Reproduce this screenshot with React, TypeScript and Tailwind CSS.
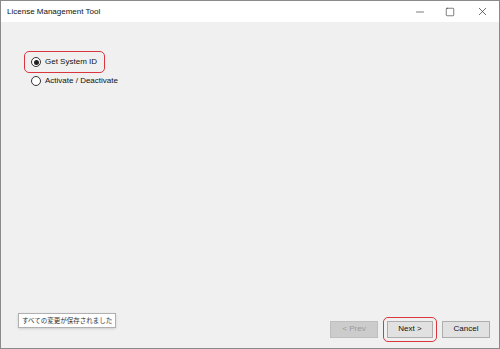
import { Minus, Square, X } from 'lucide-react';

const ui = { fontFamily: '"Liberation Sans", "Noto Sans CJK JP", sans-serif' };

function Radio({ checked, label }: { checked?: boolean; label: string }) {
  return (
    <div className="flex items-center gap-[4px] whitespace-nowrap">
      <span className="w-[10px] h-[10px] rounded-full border border-[#333] bg-white flex items-center justify-center shrink-0">
        {checked && <span className="w-[5px] h-[5px] rounded-full bg-[#222]" />}
      </span>
      <span className="text-[8px] text-[#111]">{label}</span>
    </div>
  );
}

export default function App() {
  return (
    <div className="w-[500px] h-[349px] flex flex-col border border-[#8a8a8a] bg-[#f0f0f0]" style={ui}>
      {/* Title bar */}
      <div className="h-[21px] bg-white flex items-center justify-between pl-[6px] shrink-0">
        <span className="text-[8px] text-[#111] whitespace-nowrap">License Management Tool</span>
        <div className="flex items-center h-full">
          <div className="w-[30px] flex justify-center"><Minus size={12} strokeWidth={1.2} className="text-[#222]" /></div>
          <div className="w-[30px] flex justify-center"><Square size={10} strokeWidth={1.4} className="text-[#222]" /></div>
          <div className="w-[34px] flex justify-center"><X size={13} strokeWidth={1.2} className="text-[#222]" /></div>
        </div>
      </div>

      {/* Body */}
      <div className="flex-1 flex flex-col pl-[23px] pt-[29px]">
        <div className="w-[81px] h-[22px] border border-[#d9363e] rounded-[5px] flex items-center pl-[6px]">
          <Radio checked label="Get System ID" />
        </div>
        <div className="pl-[7px] mt-[2px]">
          <Radio label="Activate / Deactivate" />
        </div>
      </div>

      {/* Footer */}
      <div className="h-[34px] flex items-center justify-between pl-[17px] pr-[9px] pb-[4px] shrink-0">
        <div className="self-start mt-[-1px] bg-white border border-[#b0b0b0] shadow-sm px-[3px] h-[15px] flex items-center text-[6.5px] text-[#333] whitespace-nowrap" style={{ fontFamily: '"Noto Sans CJK JP", sans-serif' }}>
          すべての変更が保存されました
        </div>
        <div className="flex items-center gap-[5px]">
          <div className="w-[48px] h-[17px] bg-[#cccccc] border border-[#bfbfbf] flex items-center justify-center text-[8px] text-[#9a9a9a]">
            &lt; Prev
          </div>
          <div className="border border-[#d9363e] rounded-[5px] p-[3px]">
            <div className="w-[46px] h-[17px] bg-[#e1e1e1] border border-[#adadad] flex items-center justify-center text-[8px] text-[#111]">
              Next &gt;
            </div>
          </div>
          <div className="w-[48px] h-[17px] bg-[#e1e1e1] border border-[#adadad] flex items-center justify-center text-[8px] text-[#111]">
            Cancel
          </div>
        </div>
      </div>
    </div>
  );
}
